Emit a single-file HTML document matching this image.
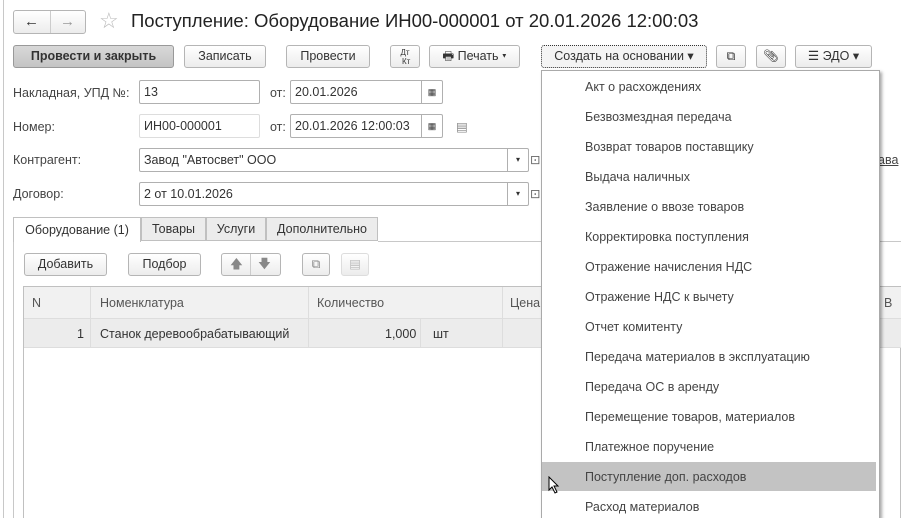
<!DOCTYPE html><html><head><meta charset="utf-8"><style>
html,body{margin:0;width:901px;height:518px;overflow:hidden}
body{background:#fff;font-family:"Liberation Sans",Arial,sans-serif;font-size:12.5px;color:#333;position:relative}
#w{position:absolute;left:0;top:0;width:901px;height:518px;overflow:hidden}
.a{position:absolute}
.btn{position:absolute;height:23px;border:1px solid #b5b5b5;border-radius:3px;background:linear-gradient(#fff,#ececec);box-sizing:border-box;text-align:center;line-height:21px;color:#333}
.in{position:absolute;height:24px;border:1px solid #b0b0b0;border-radius:2px;box-sizing:border-box;line-height:22px;padding-left:4px;color:#333;background:#fff}
.lbl{position:absolute;color:#444}
.mi{position:absolute;left:585px;color:#444}
.cal{position:absolute;right:0;top:0;width:20px;height:22px;border-left:1px solid #b0b0b0;font-size:9px;text-align:center}
</style></head><body><div id="w">
<div class="a" style="left:3px;top:0;width:1px;height:518px;background:#c8c8c8"></div>
<div class="btn" style="left:13px;top:10px;width:73px;height:24px"><span style="position:absolute;left:10px;top:0;font-size:15px">←</span><span style="position:absolute;left:36px;top:0;width:1px;height:22px;background:#ccc"></span><span style="position:absolute;left:46px;top:0;font-size:15px;color:#999">→</span></div>
<div class="a" style="left:99px;top:8px;font-size:22px;color:#bbb">☆</div>
<div class="a" style="left:131px;top:10px;font-size:18.5px;color:#222">Поступление: Оборудование ИН00-000001 от 20.01.2026 12:00:03</div>

<div class="btn" style="left:13px;top:45px;width:161px;background:linear-gradient(#d8d8d8,#c4c4c4);border-color:#999;font-weight:bold;color:#333">Провести и закрыть</div>
<div class="btn" style="left:184px;top:45px;width:82px">Записать</div>
<div class="btn" style="left:286px;top:45px;width:84px">Провести</div>
<div class="btn" style="left:390px;top:45px;width:30px;font-size:8px;line-height:9px;padding-top:2px">Дт<br>&nbsp;Кт</div>
<div class="btn" style="left:429px;top:45px;width:91px">🖶 Печать ▾</div>
<div class="btn" style="left:541px;top:45px;width:166px;border:1px dotted #333;background:#f4f4f4">Создать на основании ▾</div>
<div class="btn" style="left:716px;top:45px;width:30px">⧉</div>
<div class="btn" style="left:756px;top:45px;width:30px">📎︎</div>
<div class="btn" style="left:795px;top:45px;width:77px">☰ ЭДО ▾</div>

<div class="lbl" style="left:13px;top:86px">Накладная, УПД №:</div>
<div class="in" style="left:139px;top:80px;width:121px">13</div>
<div class="lbl" style="left:270px;top:86px">от:</div>
<div class="in" style="left:290px;top:80px;width:153px">20.01.2026<span class="cal">▦</span></div>
<div class="lbl" style="left:13px;top:120px">Номер:</div>
<div class="in" style="left:139px;top:114px;width:121px;border-color:#ddd">ИН00-000001</div>
<div class="lbl" style="left:270px;top:120px">от:</div>
<div class="in" style="left:290px;top:114px;width:153px">20.01.2026 12:00:03<span class="cal">▦</span></div>
<div class="a" style="left:456px;top:119px;color:#888">▤</div>
<div class="lbl" style="left:13px;top:153px">Контрагент:</div>
<div class="in" style="left:139px;top:148px;width:390px">Завод "Автосвет" ООО<span class="cal" style="font-size:8px">▾</span></div>
<div class="lbl" style="left:13px;top:187px">Договор:</div>
<div class="in" style="left:139px;top:182px;width:390px">2 от 10.01.2026<span class="cal" style="font-size:8px">▾</span></div>
<div class="a" style="left:530px;top:152px;color:#666">⊡</div><div class="a" style="left:530px;top:186px;color:#666">⊡</div>
<div class="a" style="left:878px;top:153px;text-decoration:underline;color:#444">ава</div>

<div class="a" style="left:13px;top:241px;width:1px;height:277px;background:#c8c8c8"></div>
<div class="a" style="left:378px;top:241px;width:523px;height:1px;background:#c8c8c8"></div>
<div class="a" style="left:13px;top:217px;width:128px;height:25px;border:1px solid #c0c0c0;border-bottom:none;background:#fff;box-sizing:border-box;text-align:center;line-height:24px">Оборудование (1)</div>
<div class="a" style="left:141px;top:217px;width:65px;height:24px;border:1px solid #c0c0c0;background:#ececec;box-sizing:border-box;text-align:center;line-height:22px">Товары</div>
<div class="a" style="left:206px;top:217px;width:60px;height:24px;border:1px solid #c0c0c0;background:#ececec;box-sizing:border-box;text-align:center;line-height:22px">Услуги</div>
<div class="a" style="left:266px;top:217px;width:112px;height:24px;border:1px solid #c0c0c0;background:#ececec;box-sizing:border-box;text-align:center;line-height:22px">Дополнительно</div>

<div class="btn" style="left:24px;top:253px;width:83px">Добавить</div>
<div class="btn" style="left:128px;top:253px;width:73px">Подбор</div>
<div class="btn" style="left:221px;top:253px;width:60px;color:#888"><span style="position:absolute;left:8px">🡅</span><span style="position:absolute;left:28px;top:0;width:1px;height:21px;background:#ccc"></span><span style="position:absolute;left:36px">🡇</span></div>
<div class="btn" style="left:302px;top:253px;width:28px;color:#888">⧉</div>
<div class="btn" style="left:341px;top:253px;width:28px;color:#bbb;border-color:#ddd">▤</div>

<div class="a" style="left:23px;top:286px;width:878px;height:240px;border:1px solid #c0c0c0;box-sizing:border-box"></div>
<div class="a" style="left:24px;top:287px;width:877px;height:31px;background:#f1f1f1;border-bottom:1px solid #ddd"></div>
<div class="a" style="left:24px;top:319px;width:877px;height:28px;background:#ececec;border-bottom:1px solid #ddd"></div>
<div class="a" style="left:90px;top:287px;width:1px;height:60px;background:#ddd"></div>
<div class="a" style="left:308px;top:287px;width:1px;height:60px;background:#ddd"></div>
<div class="a" style="left:502px;top:287px;width:1px;height:60px;background:#ddd"></div>
<div class="a" style="left:420px;top:319px;width:1px;height:28px;background:#ddd"></div>
<div class="a" style="left:32px;top:296px;color:#555">N</div>
<div class="a" style="left:100px;top:296px;color:#555">Номенклатура</div>
<div class="a" style="left:317px;top:296px;color:#555">Количество</div>
<div class="a" style="left:510px;top:296px;color:#555">Цена</div>
<div class="a" style="left:884px;top:296px;color:#555">В</div>
<div class="a" style="left:77px;top:327px">1</div>
<div class="a" style="left:100px;top:327px">Станок деревообрабатывающий</div>
<div class="a" style="left:385px;top:327px">1,000</div>
<div class="a" style="left:433px;top:327px">шт</div>

<div class="a" style="left:541px;top:70px;width:337px;height:460px;background:#fff;border:1px solid #aaa;box-shadow:2px 2px 3px rgba(0,0,0,.35)"></div>
<div class="a" style="left:542px;top:462px;width:334px;height:29px;background:#c3c3c3"></div>
<div class="mi" style="top:80px">Акт о расхождениях</div>
<div class="mi" style="top:110px">Безвозмездная передача</div>
<div class="mi" style="top:140px">Возврат товаров поставщику</div>
<div class="mi" style="top:170px">Выдача наличных</div>
<div class="mi" style="top:200px">Заявление о ввозе товаров</div>
<div class="mi" style="top:230px">Корректировка поступления</div>
<div class="mi" style="top:260px">Отражение начисления НДС</div>
<div class="mi" style="top:290px">Отражение НДС к вычету</div>
<div class="mi" style="top:320px">Отчет комитенту</div>
<div class="mi" style="top:350px">Передача материалов в эксплуатацию</div>
<div class="mi" style="top:380px">Передача ОС в аренду</div>
<div class="mi" style="top:410px">Перемещение товаров, материалов</div>
<div class="mi" style="top:440px">Платежное поручение</div>
<div class="mi" style="top:470px">Поступление доп. расходов</div>
<div class="mi" style="top:500px">Расход материалов</div>
<svg class="a" style="left:548px;top:476px" width="12" height="18"><path d="M1 1 L1 14 L4 11 L7 17 L9 16 L6 10 L10 10 Z" fill="#fff" stroke="#000" stroke-width="1"/></svg>
</div></body></html>
